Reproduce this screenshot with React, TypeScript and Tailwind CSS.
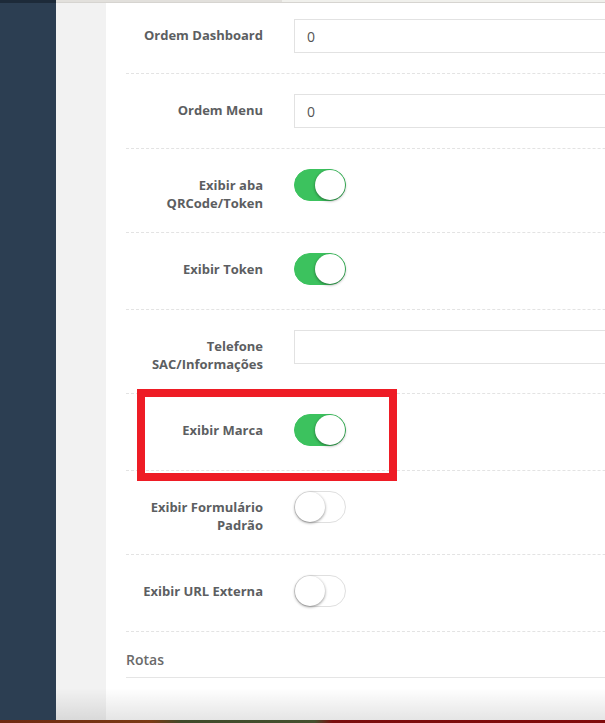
import React from "react";

type Row =
  | { kind: "input"; label: string[]; value: string }
  | { kind: "toggle"; label: string[]; on: boolean };

const rows: Row[] = [
  { kind: "input", label: ["Ordem Dashboard"], value: "0" },
  { kind: "input", label: ["Ordem Menu"], value: "0" },
  { kind: "toggle", label: ["Exibir aba", "QRCode/Token"], on: true },
  { kind: "toggle", label: ["Exibir Token"], on: true },
  { kind: "input", label: ["Telefone", "SAC/Informações"], value: "" },
  { kind: "toggle", label: ["Exibir Marca"], on: true },
  { kind: "toggle", label: ["Exibir Formulário", "Padrão"], on: false },
  { kind: "toggle", label: ["Exibir URL Externa"], on: false },
];

function Switch({ on }: { on: boolean }) {
  return (
    <div
      className={
        on
          ? "relative w-[52px] h-[32px] rounded-full bg-[#3cc25e] border border-[#3cc25e]"
          : "relative w-[52px] h-[32px] rounded-full bg-white border border-[#dfdfdf]"
      }
    >
      <div
        className={
          on
            ? "absolute top-0 right-0 w-[30px] h-[30px] rounded-full bg-white shadow-[0_1px_3px_rgba(0,0,0,0.45)]"
            : "absolute top-0 left-0 w-[30px] h-[30px] rounded-full bg-white shadow-[0_1px_3px_rgba(0,0,0,0.45)]"
        }
      />
    </div>
  );
}

function FormRow({ row, first }: { row: Row; first: boolean }) {
  return (
    <div
      className={
        (first ? "pt-[16px]" : "pt-[20px]") +
        " pb-[20px] border-b border-dashed border-[#e3e3e3] flex items-start"
      }
    >
      <div className="w-[137px] shrink-0 pt-[7px] text-right text-[13px] leading-[18px] font-bold text-[#5c5e61]">
        {row.label.map((l) => (
          <div key={l} className="whitespace-nowrap">
            {l}
          </div>
        ))}
      </div>
      <div className="ml-[31px] flex-1">
        {row.kind === "input" ? (
          <div className="h-[34px] w-[400px] border border-[#e2e2e2] bg-white px-[12px] flex items-center text-[14px] text-[#555]">
            {row.value}
          </div>
        ) : (
          <div className="h-[36px]">
            <Switch on={row.on} />
          </div>
        )}
      </div>
    </div>
  );
}

export default function App() {
  return (
    <div
      className="relative w-[605px] h-[723px] overflow-hidden flex flex-col bg-white"
      style={{ fontFamily: '"Open Sans", "Noto Sans", sans-serif' }}
    >
      {/* window top edge */}
      <div className="h-[3px] shrink-0 flex">
        <div className="w-[56px] bg-[#1d2a39]" />
        <div className="w-[226px] bg-[#e2e0dc] border-b border-[#d6d4d0]" />
        <div className="flex-1 bg-[#f0f0ec] border-b border-[#d6d4d0]" />
      </div>

      <div className="flex-1 flex min-h-0">
        <aside className="w-[56px] shrink-0 bg-[#2c3e52]" />
        <div className="w-[50px] shrink-0 bg-[#f2f2f2]" />
        <main className="flex-1 pl-[20px] min-w-0">
          <div className="w-[600px]">
            {rows.map((r, i) => (
              <FormRow key={i} row={r} first={i === 0} />
            ))}
            <div className="pt-[18px] pb-[7px] border-b border-[#e5e5e5] text-[14px] leading-[20px] font-semibold text-[#6a6a6a]">
              Rotas
            </div>
          </div>
        </main>
      </div>

      {/* desktop strip below the window */}
      <div className="h-[3px] shrink-0 bg-[linear-gradient(90deg,#6e2a12_0%,#7a3a14_25%,#3f4a2a_30%,#44502e_52%,#7a0d0d_55%,#800a0a_100%)]" />

      {/* window bottom shading */}
      <div className="pointer-events-none absolute left-[56px] right-0 bottom-[3px] h-[32px] bg-[linear-gradient(180deg,rgba(0,0,0,0)_0%,rgba(0,0,0,0.1)_100%)]" />

      {/* highlight frame */}
      <div className="pointer-events-none absolute left-[137px] top-[389px] w-[260px] h-[92px] border-[8px] border-[#ee1c25]" />
    </div>
  );
}
